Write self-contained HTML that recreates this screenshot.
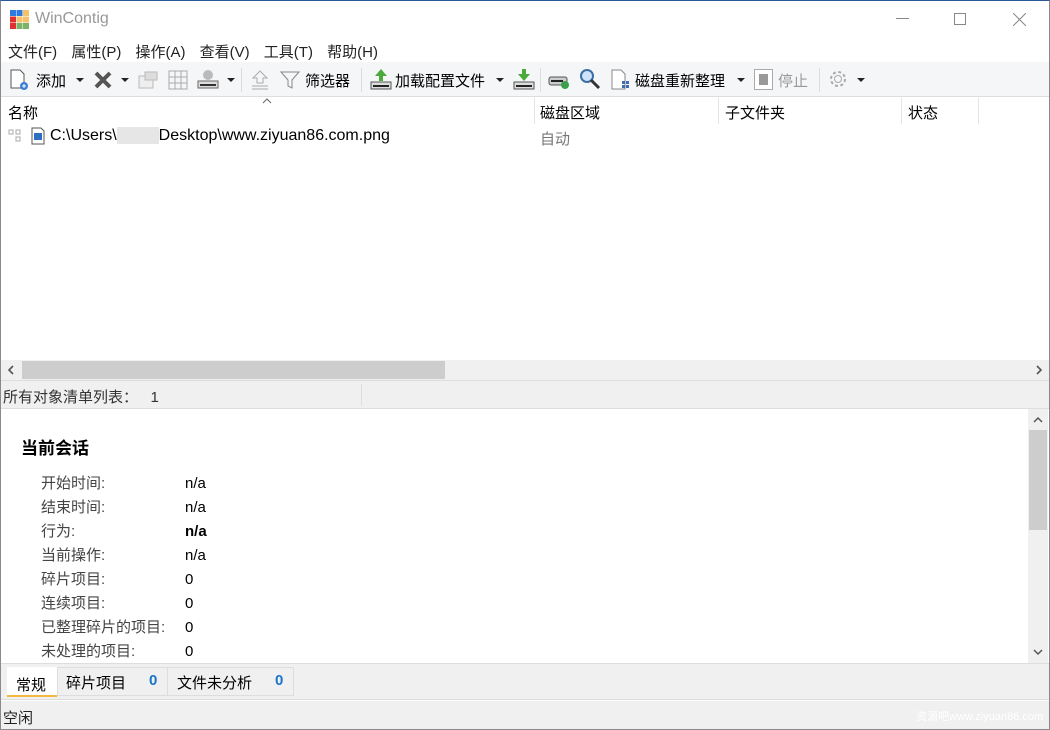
<!DOCTYPE html>
<html><head><meta charset="utf-8"><style>
*{margin:0;padding:0;box-sizing:border-box}
body{width:1050px;height:730px;overflow:hidden;background:#fff;font-family:"Liberation Sans","Noto Sans CJK SC",sans-serif;font-size:14px;color:#000;position:relative}
.a{position:absolute;white-space:nowrap}
.g{color:#444}
.dd{position:absolute;width:0;height:0;border-left:4px solid transparent;border-right:4px solid transparent;border-top:4px solid #222}
</style></head><body>
<div class="a" style="left:0;top:0;width:1050px;height:730px;border:1px solid #8a8a8a;border-top-color:#2b5797"></div>
<svg class="a" style="left:10px;top:10px" width="19" height="19"><rect x="0" y="0" width="6" height="6" fill="#2d7be0"/><rect x="6.5" y="0" width="6" height="6" fill="#2d7be0"/><rect x="13" y="0" width="6" height="6" fill="#f5c26b"/><rect x="0" y="6.5" width="6" height="6" fill="#e03030"/><rect x="6.5" y="6.5" width="6" height="6" fill="#f5c26b"/><rect x="13" y="6.5" width="6" height="6" fill="#f5c26b"/><rect x="0" y="13" width="6" height="6" fill="#e03030"/><rect x="6.5" y="13" width="6" height="6" fill="#7cb36a"/><rect x="13" y="13" width="6" height="6" fill="#7cb36a"/></svg>
<div class="a" style="left:35px;top:10px;font-size:16px;color:#999">WinContig</div>
<div class="a" style="left:896px;top:18px;width:13px;height:1px;background:#888"></div>
<div class="a" style="left:954px;top:13px;width:12px;height:12px;border:1px solid #888"></div>
<svg class="a" style="left:1013px;top:13px" width="13" height="13"><path d="M0 0L13 13M13 0L0 13" stroke="#888"/></svg>
<div class="a" style="left:8px;top:41px;font-size:15px;color:#222;word-spacing:10px">文件(F) 属性(P) 操作(A) 查看(V) 工具(T) 帮助(H)</div>
<div class="a" style="left:1px;top:62px;width:1048px;height:35px;background:#f5f6f7;border-bottom:1px solid #ddd"></div>
<svg class="a" style="left:9px;top:69px" width="22" height="22"><path d="M2 1h9l4 4v14H2z" fill="#fff" stroke="#555"/><circle cx="15" cy="17" r="4" fill="#3b7fd4"/><path d="M13 17h4M15 15v4" stroke="#fff"/></svg>
<div class="a" style="left:36px;top:70px;font-size:15px">添加</div>
<div class="dd" style="left:76px;top:78px"></div>
<svg class="a" style="left:93px;top:70px" width="20" height="20"><path d="M3 3L17 17M17 3L3 17" stroke="#555" stroke-width="4"/></svg>
<div class="dd" style="left:121px;top:78px"></div>
<svg class="a" style="left:137px;top:70px" width="22" height="20"><rect x="2" y="6" width="14" height="12" fill="#eee" stroke="#bbb"/><rect x="8" y="2" width="12" height="8" fill="#ddd" stroke="#bbb"/></svg>
<svg class="a" style="left:168px;top:70px" width="20" height="20"><path d="M1 1h18v18H1zM7 1v18M13 1v18M1 7h18M1 13h18" fill="none" stroke="#aaa"/></svg>
<svg class="a" style="left:197px;top:68px" width="22" height="22"><circle cx="11" cy="7" r="5" fill="#bbb"/><rect x="1" y="13" width="20" height="7" fill="#ddd" stroke="#666"/><rect x="3" y="16" width="16" height="2" fill="#333"/></svg>
<div class="dd" style="left:227px;top:78px"></div>
<div class="a" style="left:241px;top:68px;width:1px;height:24px;background:#ddd"></div>
<svg class="a" style="left:250px;top:69px" width="20" height="22"><path d="M10 2L3 9h4v5h6V9h4z" fill="none" stroke="#aaa"/><path d="M2 17h16M2 20h16" stroke="#aaa"/></svg>
<svg class="a" style="left:280px;top:70px" width="20" height="20"><path d="M1 2h18l-7 8v8l-4-2v-6z" fill="none" stroke="#888"/></svg>
<div class="a" style="left:305px;top:70px;font-size:15px">筛选器</div>
<div class="a" style="left:361px;top:68px;width:1px;height:24px;background:#ddd"></div>
<svg class="a" style="left:370px;top:68px" width="22" height="22"><path d="M11 1L5 8h4v5h4V8h4z" fill="#4caa3c"/><rect x="1" y="14" width="20" height="7" fill="#ddd" stroke="#555"/><rect x="3" y="17" width="16" height="2" fill="#222"/></svg>
<div class="a" style="left:395px;top:70px;font-size:15px">加载配置文件</div>
<div class="dd" style="left:496px;top:78px"></div>
<svg class="a" style="left:513px;top:68px" width="22" height="22"><path d="M11 13L5 6h4V1h4v5h4z" fill="#4caa3c"/><rect x="1" y="14" width="20" height="7" fill="#ddd" stroke="#555"/><rect x="3" y="17" width="16" height="2" fill="#222"/></svg>
<div class="a" style="left:540px;top:68px;width:1px;height:24px;background:#ddd"></div>
<svg class="a" style="left:548px;top:72px" width="22" height="18"><rect x="1" y="5" width="18" height="8" rx="2" fill="#ccc" stroke="#555"/><rect x="3" y="8" width="12" height="2" fill="#222"/><circle cx="17" cy="13" r="4" fill="#3aa04a"/></svg>
<svg class="a" style="left:579px;top:68px" width="22" height="22"><circle cx="8" cy="8" r="6" fill="#cfe4fa" stroke="#3a6ea5" stroke-width="2"/><path d="M12 12l8 8" stroke="#333" stroke-width="3"/></svg>
<svg class="a" style="left:610px;top:69px" width="22" height="22"><path d="M2 1h9l4 4v15H2z" fill="#fff" stroke="#888"/><rect x="12" y="12" width="3" height="3" fill="#3b6fb0"/><rect x="16" y="12" width="3" height="3" fill="#3b6fb0"/><rect x="12" y="16" width="3" height="3" fill="#3b6fb0"/><rect x="16" y="16" width="3" height="3" fill="#3b6fb0"/></svg>
<div class="a" style="left:635px;top:70px;font-size:15px">磁盘重新整理</div>
<div class="dd" style="left:737px;top:78px"></div>
<div class="a" style="left:754px;top:69px;width:19px;height:21px;border:1px solid #aaa;background:#fff"><div style="margin:4px;width:9px;height:11px;background:#999"></div></div>
<div class="a" style="left:778px;top:70px;color:#999;font-size:15px">停止</div>
<div class="a" style="left:819px;top:68px;width:1px;height:24px;background:#ddd"></div>
<svg class="a" style="left:828px;top:69px" width="20" height="20"><circle cx="10" cy="10" r="7" fill="none" stroke="#aaa" stroke-width="2" stroke-dasharray="3 2.5"/><circle cx="10" cy="10" r="3.5" fill="none" stroke="#aaa"/></svg>
<div class="dd" style="left:857px;top:78px"></div>
<svg class="a" style="left:262px;top:98px" width="10" height="6"><path d="M1 5l4-4 4 4" fill="none" stroke="#666"/></svg>
<div class="a" style="left:8px;top:102px;font-size:15px">名称</div>
<div class="a" style="left:534px;top:98px;width:1px;height:26px;background:#e5e5e5"></div>
<div class="a" style="left:540px;top:102px;font-size:15px">磁盘区域</div>
<div class="a" style="left:718px;top:98px;width:1px;height:26px;background:#e5e5e5"></div>
<div class="a" style="left:725px;top:102px;font-size:15px">子文件夹</div>
<div class="a" style="left:901px;top:98px;width:1px;height:26px;background:#e5e5e5"></div>
<div class="a" style="left:908px;top:102px;font-size:15px">状态</div>
<div class="a" style="left:978px;top:98px;width:1px;height:26px;background:#e5e5e5"></div>
<svg class="a" style="left:8px;top:129px" width="14" height="14"><path d="M1 1h4v4H1zM8 1h4v4H8zM8 8h4v4H8z" fill="none" stroke="#aaa"/></svg>
<svg class="a" style="left:31px;top:127px" width="14" height="18"><path d="M1 1h9l3 3v13H1z" fill="#fff" stroke="#555"/><rect x="3" y="6" width="8" height="7" fill="#2d6fc0"/></svg>
<div class="a" style="left:50px;top:127px;font-size:16px">C:\Users\<span style="display:inline-block;width:42px;height:17px;background:#e6e6e6;vertical-align:middle"></span>Desktop\www.ziyuan86.com.png</div>
<div class="a" style="left:540px;top:128px;color:#777;font-size:15px">自动</div>
<div class="a" style="left:1px;top:360px;width:1048px;height:20px;background:#f0f0f0"></div>
<div class="a" style="left:22px;top:361px;width:423px;height:18px;background:#cdcdcd"></div>
<svg class="a" style="left:7px;top:365px" width="8" height="10"><path d="M6 1L2 5l4 4" fill="none" stroke="#555" stroke-width="1.6"/></svg>
<svg class="a" style="left:1035px;top:365px" width="8" height="10"><path d="M2 1l4 4-4 4" fill="none" stroke="#555" stroke-width="1.6"/></svg>
<div class="a" style="left:1px;top:380px;width:1048px;height:29px;background:#f0f0f0;border-top:1px solid #ddd;border-bottom:1px solid #ddd"></div>
<div class="a" style="left:3px;top:386px;color:#333;font-size:15px">所有对象清单列表：&nbsp;&nbsp;&nbsp;1</div>
<div class="a" style="left:361px;top:384px;width:1px;height:22px;background:#ddd"></div>
<div class="a" style="left:21px;top:434px;font-size:17px;font-weight:bold">当前会话</div>
<div class="a g" style="left:41px;top:472px;line-height:24px;font-size:15px">开始时间:<br>结束时间:<br>行为:<br>当前操作:<br>碎片项目:<br>连续项目:<br>已整理碎片的项目:<br>未处理的项目:</div>
<div class="a" style="left:185px;top:472px;line-height:24px;font-size:15px">n/a<br>n/a<br><b>n/a</b><br>n/a<br>0<br>0<br>0<br>0</div>
<div class="a" style="left:1028px;top:409px;width:20px;height:254px;background:#f0f0f0"></div>
<div class="a" style="left:1029px;top:430px;width:18px;height:100px;background:#cdcdcd"></div>
<svg class="a" style="left:1033px;top:416px" width="10" height="8"><path d="M1 6l4-4 4 4" fill="none" stroke="#555" stroke-width="1.5"/></svg>
<svg class="a" style="left:1033px;top:648px" width="10" height="8"><path d="M1 2l4 4 4-4" fill="none" stroke="#555" stroke-width="1.5"/></svg>
<div class="a" style="left:1px;top:663px;width:1048px;height:37px;background:#f0f0f0;border-top:1px solid #ddd;border-bottom:1px solid #ddd"></div>
<div class="a" style="left:7px;top:667px;width:50px;height:30px;background:#fff;border-bottom:2px solid #f5b642"></div>
<div class="a" style="left:16px;top:674px;font-size:15px">常规</div>
<div class="a" style="left:57px;top:667px;width:237px;height:29px;border:1px solid #ddd"></div>
<div class="a" style="left:167px;top:667px;width:1px;height:29px;background:#ddd"></div>
<div class="a" style="left:66px;top:672px;font-size:15px">碎片项目</div>
<div class="a" style="left:149px;top:672px;color:#1a74c9;font-weight:bold;font-size:15px">0</div>
<div class="a" style="left:177px;top:672px;font-size:15px">文件未分析</div>
<div class="a" style="left:275px;top:672px;color:#1a74c9;font-weight:bold;font-size:15px">0</div>
<div class="a" style="left:1px;top:701px;width:1048px;height:28px;background:#f0f0f0"></div>
<div class="a" style="left:3px;top:707px;color:#222;font-size:15px">空闲</div>
<div class="a" style="left:916px;top:708px;font-size:11px;color:#fff">资源吧www.ziyuan86.com</div>
</body></html>
